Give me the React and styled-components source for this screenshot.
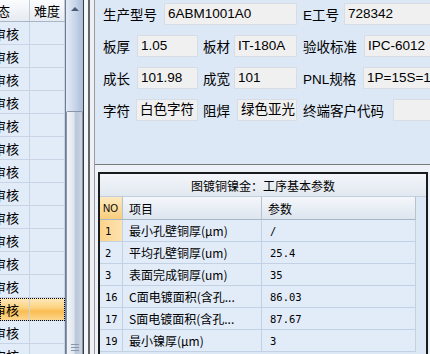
import React from "react";
import styled, { createGlobalStyle } from "styled-components";

const GlobalStyle = createGlobalStyle`
  html, body {
    margin: 0;
    padding: 0;
    background: #dde8f6;
  }
  body {
    font-family: "Liberation Sans", "Noto Sans CJK SC", sans-serif;
  }
`;

const listRows = Array.from({ length: 15 }, (_, i) => ({ id: i, state: "审核", selected: i === 12 }));

const formRows = [
  [
    { label: "生产型号", lw: 61, value: "6ABM1001A0", fw: 133 },
    { label: "E工号", lw: 47, lead: 6, value: "728342", fw: 140 },
  ],
  [
    { label: "板厚", lw: 34, value: "1.05", fw: 61 },
    { label: "板材", lw: 36, lead: 5, value: "IT-180A", fw: 63 },
    { label: "验收标准", lw: 67, lead: 6, value: "IPC-6012", fw: 140 },
  ],
  [
    { label: "成长", lw: 34, value: "101.98", fw: 61 },
    { label: "成宽", lw: 36, lead: 5, value: "101", fw: 63 },
    { label: "PNL规格", lw: 66, lead: 6, value: "1P=15S=1SET", fw: 140 },
  ],
  [
    { label: "字符", lw: 33, value: "白色字符", fw: 62 },
    { label: "阻焊", lw: 39, lead: 5, value: "绿色亚光", fw: 60 },
    { label: "终端客户代码", lw: 96, lead: 6, value: "", fw: 140 },
  ],
];

const params = [
  { no: "1", item: "最小孔壁铜厚(μm)", value: "/", current: true },
  { no: "2", item: "平均孔壁铜厚(um)", value: "25.4" },
  { no: "3", item: "表面完成铜厚(um)", value: "35" },
  { no: "16", item: "C面电镀面积(含孔...", value: "86.03" },
  { no: "17", item: "S面电镀面积(含孔...", value: "87.67" },
  { no: "19", item: "最小镍厚(μm)", value: "3" },
];

function App() {
  return (
    <>
      <GlobalStyle />
      <Window>
        <ListPane>
          <ListTable>
            <ListHeader>
              <ListCell $head>
                <Shift $x={-16}>状态</Shift>
              </ListCell>
              <ListCell $head $center>难度</ListCell>
            </ListHeader>
            {listRows.map((row) => (
              <ListRow key={row.id} $selected={row.selected}>
                <ListCell>
                  <Shift $x={-7}>{row.state}</Shift>
                </ListCell>
                <ListCell />
              </ListRow>
            ))}
          </ListTable>
          <ScrollBar>
            <ScrollArrow>
              <ArrowUp />
            </ScrollArrow>
            <ScrollSpace />
            <ScrollThumb>
              <Grip />
            </ScrollThumb>
          </ScrollBar>
        </ListPane>

        <Splitter />

        <DetailPane>
          <FormPanel>
            {formRows.map((row, r) => (
              <FormRow key={r}>
                {row.map((f) => (
                  <React.Fragment key={f.label}>
                    <Label $w={f.lw} $lead={f.lead || 0}>
                      {f.label}
                    </Label>
                    <Field $w={f.fw}>{f.value}</Field>
                  </React.Fragment>
                ))}
              </FormRow>
            ))}
          </FormPanel>

          <GridBox>
            <GridTitle>图镀铜镍金：工序基本参数</GridTitle>
            <GridRow>
              <HeadCell $no>NO</HeadCell>
              <HeadCell>项目</HeadCell>
              <HeadCell>参数</HeadCell>
            </GridRow>
            {params.map((p) => (
              <GridRow key={p.no}>
                <DataCell $no $current={p.current}>
                  {p.no}
                </DataCell>
                <DataCell>{p.item}</DataCell>
                <DataCell $value>{p.value}</DataCell>
              </GridRow>
            ))}
          </GridBox>
        </DetailPane>
      </Window>
    </>
  );
}

const Window = styled.div`
  display: flex;
  width: 430px;
  height: 354px;
  overflow: hidden;
  background: #dde8f6;
`;

/* left list */

const ListPane = styled.div`
  display: flex;
  flex: 0 0 84px;
  height: 100%;
`;

const ListTable = styled.div`
  width: 65px;
  overflow: hidden;
  background: #e2ecf9;
  font-family: "Noto Sans CJK SC", sans-serif;
  font-size: 13px;
  color: #000;
`;

const ListHeader = styled.div`
  display: grid;
  grid-template-columns: 30px 35px;
  height: 22px;
  box-sizing: border-box;
  border-bottom: 1px solid #a8b5c7;
  background: linear-gradient(#fbfcfe, #e6ebf2);
`;

const ListRow = styled.div`
  display: grid;
  grid-template-columns: 30px 35px;
  height: 23px;
  box-sizing: border-box;
  border-bottom: 1px solid #c7d4e6;
  background: ${(p) =>
    p.$selected
      ? "linear-gradient(#fde9bd, #fcd27f 45%, #f9bd52 60%, #fdd68c)"
      : "transparent"};
  outline: ${(p) => (p.$selected ? "1px dotted #000" : "none")};
  outline-offset: -1px;
`;

const ListCell = styled.div`
  display: flex;
  align-items: center;
  justify-content: ${(p) => (p.$center ? "center" : "flex-start")};
  overflow: hidden;
  white-space: nowrap;
  border-right: 1px solid ${(p) => (p.$head ? "#c2ccd9" : "#c7d4e6")};
  line-height: 1;
`;

const Shift = styled.span`
  margin-left: ${(p) => p.$x}px;
  flex-shrink: 0;
`;

const ScrollBar = styled.div`
  width: 17px;
  display: flex;
  flex-direction: column;
  border-left: 1px solid #6f7c91;
  border-right: 1px solid #3a3a3a;
  background: linear-gradient(to right, #e3eaf5, #c8d5e9 55%, #a8bbd8);
`;

const ScrollArrow = styled.div`
  height: 18px;
  display: flex;
  align-items: center;
  justify-content: center;
`;

const ArrowUp = styled.div`
  width: 0;
  height: 0;
  border-left: 4px solid transparent;
  border-right: 4px solid transparent;
  border-bottom: 4px solid #4b5b76;
`;

const ScrollSpace = styled.div`
  flex: 0 0 93px;
`;

const ScrollThumb = styled.div`
  flex: 1;
  display: flex;
  flex-direction: column;
  justify-content: flex-end;
  align-items: center;
  padding-bottom: 3px;
  border: 1px solid #8794aa;
  border-bottom: none;
  border-radius: 2px 2px 0 0;
  background: linear-gradient(to right, #f1f4f8, #e1e7ef 45%, #b9c6d9 58%, #c9d3e2);
`;

const Grip = styled.div`
  width: 8px;
  height: 7px;
  background: repeating-linear-gradient(#8a96a9 0 1px, transparent 1px 3px);
`;

const Splitter = styled.div`
  flex: 0 0 11px;
  background: linear-gradient(
    to right,
    #f3f6fa 0 4px,
    #666 4px 6px,
    #edf1f7 6px 10px,
    #9b9b9b 10px 11px
  );
`;

/* right side */

const DetailPane = styled.div`
  flex: 1;
  min-width: 0;
  display: flex;
  flex-direction: column;
  background: #edf2f8;
`;

const FormPanel = styled.div`
  height: 165px;
  box-sizing: border-box;
  padding: 3px 0 0 8px;
  display: flex;
  flex-direction: column;
  gap: 10px;
  background: #dde8f6;
  border-bottom: 1px solid #7b7b7b;
  overflow: hidden;
`;

const FormRow = styled.div`
  display: flex;
  align-items: center;
  height: 22px;
`;

const Label = styled.div`
  flex: 0 0 ${(p) => p.$w}px;
  padding-left: ${(p) => p.$lead}px;
  box-sizing: border-box;
  font-size: 13.5px;
  color: #000;
  white-space: nowrap;
`;

const Field = styled.div`
  flex: 0 0 ${(p) => p.$w}px;
  height: 22px;
  box-sizing: border-box;
  padding-left: 3px;
  line-height: 20px;
  font-size: 13.5px;
  color: #000;
  white-space: nowrap;
  overflow: hidden;
  background: #f0f0f0;
  border: 1px solid #d8dde5;
`;

const GridBox = styled.div`
  flex: 1;
  margin: 7px 2px 0 3px;
  border: 2px solid #1b1b1b;
  border-bottom: none;
  background: #dde8f6;
  overflow: hidden;
  font-family: "Noto Sans CJK SC", sans-serif;
  font-size: 12px;
  color: #000;
`;

const GridTitle = styled.div`
  height: 23px;
  box-sizing: border-box;
  display: flex;
  align-items: center;
  justify-content: center;
  border-bottom: 1px solid #c3cddb;
  background: linear-gradient(#f3f6fa, #e2e8f0);
`;

const GridRow = styled.div`
  display: grid;
  grid-template-columns: 23px 139px 154px;
`;

const HeadCell = styled.div`
  height: 23px;
  box-sizing: border-box;
  display: flex;
  align-items: center;
  padding-left: ${(p) => (p.$no ? 3 : 6)}px;
  border-right: 1px solid #b7c2d1;
  border-bottom: 1px solid #a9b6c8;
  background: ${(p) =>
    p.$no
      ? "linear-gradient(#fde9bf, #f8cd7c)"
      : "linear-gradient(#f4f7fb, #dde5ef)"};
  font-family: ${(p) => (p.$no ? '"Liberation Sans", sans-serif' : "inherit")};
  font-size: ${(p) => (p.$no ? "10px" : "12px")};
`;

const DataCell = styled.div`
  height: 22px;
  box-sizing: border-box;
  display: flex;
  align-items: center;
  padding-left: ${(p) => (p.$no ? 5 : p.$value ? 8 : 6)}px;
  white-space: nowrap;
  overflow: hidden;
  border-right: 1px solid #c3d1e4;
  border-bottom: 1px solid #c3d1e4;
  background: ${(p) =>
    p.$current
      ? "linear-gradient(to right, #fbd38a, #fde3b0)"
      : "#e2ecf9"};
  font-family: ${(p) =>
    p.$value || p.$no ? '"DejaVu Sans Mono", "Noto Sans CJK SC", monospace' : "inherit"};
  font-size: ${(p) => (p.$value || p.$no ? "10.5px" : "12px")};
`;

export default App;
